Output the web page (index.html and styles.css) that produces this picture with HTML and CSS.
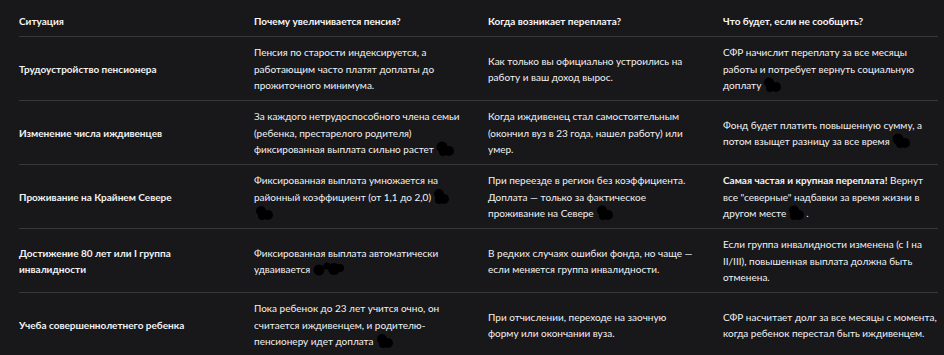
FILE: index.html
```html
<!DOCTYPE html>
<html lang="ru">
<head>
<meta charset="utf-8">
<link rel="stylesheet" href="styles.css">
</head>
<body>
<table class="grid">
  <colgroup>
    <col class="c1"><col class="c2"><col class="c3"><col class="c4">
  </colgroup>
  <thead>
    <tr>
      <th>Ситуация</th>
      <th>Почему увеличивается пенсия?</th>
      <th>Когда возникает переплата?</th>
      <th>Что будет, если не сообщить?</th>
    </tr>
  </thead>
  <tbody>
    <tr>
      <td class="name">Трудоустройство пенсионера</td>
      <td>Пенсия по старости индексируется, а работающим часто платят доплаты до прожиточного минимума.</td>
      <td>Как только вы официально устроились на работу и ваш доход вырос.</td>
      <td>СФР начислит переплату за все месяцы работы и потребует вернуть социальную доплату<span class="blob"><svg width="22" height="16" viewBox="0 0 22 16"><circle cx="8" cy="5.5" r="5"/><circle cx="15" cy="10" r="5"/><circle cx="9" cy="11" r="4"/></svg></span></td>
    </tr>
    <tr>
      <td class="name">Изменение числа иждивенцев</td>
      <td>За каждого нетрудоспособного члена семьи (ребенка, престарелого родителя) фиксированная выплата сильно растет<span class="blob"><svg width="22" height="16" viewBox="0 0 22 16"><circle cx="8" cy="6" r="5.5"/><circle cx="15" cy="10" r="5"/><circle cx="9" cy="11" r="4"/></svg></span></td>
      <td>Когда иждивенец стал самостоятельным (окончил вуз в 23 года, нашел работу) или умер.</td>
      <td>Фонд будет платить повышенную сумму, а потом взыщет разницу за все время<span class="blob"><svg width="22" height="16" viewBox="0 0 22 16"><circle cx="8" cy="6" r="5.5"/><circle cx="15" cy="10" r="5"/><circle cx="10" cy="11" r="4"/></svg></span></td>
    </tr>
    <tr>
      <td class="name">Проживание на Крайнем Севере</td>
      <td>Фиксированная выплата умножается на районный коэффициент (от 1,1 до 2,0)<span class="blob"><svg width="20" height="16" viewBox="0 0 20 16"><circle cx="8" cy="5" r="5"/><circle cx="13" cy="10" r="5"/><circle cx="8" cy="11" r="4"/></svg></span> <span class="blob"><svg width="22" height="16" viewBox="0 0 22 16"><circle cx="7" cy="6" r="5"/><circle cx="14" cy="10" r="5"/><circle cx="8" cy="11" r="4"/></svg></span></td>
      <td>При переезде в регион без коэффициента. Доплата — только за фактическое проживание на Севере<span class="blob"><svg width="22" height="16" viewBox="0 0 22 16"><circle cx="8" cy="5.5" r="5"/><circle cx="14" cy="10" r="5"/><circle cx="9" cy="11" r="4"/></svg></span></td>
      <td><strong>Самая частая и крупная переплата!</strong> Вернут все "северные" надбавки за время жизни в другом месте<span class="blob"><svg width="20" height="16" viewBox="0 0 20 16"><circle cx="8" cy="5.5" r="5"/><circle cx="13" cy="10" r="5"/><circle cx="8" cy="11" r="4"/></svg></span>.</td>
    </tr>
    <tr>
      <td class="name">Достижение 80 лет или I группа инвалидности</td>
      <td>Фиксированная выплата автоматически удваивается<span class="blob"><svg width="38" height="16" viewBox="0 0 38 16"><circle cx="9" cy="9" r="5.5"/><circle cx="17" cy="5" r="3.5"/><circle cx="24" cy="8" r="6"/><circle cx="30" cy="7" r="4"/></svg></span></td>
      <td>В редких случаях ошибки фонда, но чаще — если меняется группа инвалидности.</td>
      <td>Если группа инвалидности изменена (с I на II/III), повышенная выплата должна быть отменена.</td>
    </tr>
    <tr>
      <td class="name">Учеба совершеннолетнего ребенка</td>
      <td>Пока ребенок до 23 лет учится очно, он считается иждивенцем, и родителю-пенсионеру идет доплата<span class="blob"><svg width="22" height="16" viewBox="0 0 22 16"><circle cx="8" cy="6" r="5"/><circle cx="14" cy="10" r="5"/><circle cx="9" cy="11" r="4"/></svg></span></td>
      <td>При отчислении, переходе на заочную форму или окончании вуза.</td>
      <td>СФР насчитает долг за все месяцы с момента, когда ребенок перестал быть иждивенцем.</td>
    </tr>
  </tbody>
</table>
</body>
</html>
```

FILE: styles.css
```css
html, body {
  margin: 0;
  background: #18181b;
}
body {
  padding: 6px 0 0 19px;
  font-family: Lato, "Noto Sans", sans-serif;
  font-size: 10px;
  line-height: 16.35px;
  color: #f2f2f2;
}
.grid {
  border-collapse: collapse;
  table-layout: fixed;
  width: 919px;
}
.c1 { width: 235px; }
.c2 { width: 234px; }
.c3 { width: 235px; }
.c4 { width: 215px; }
th, td {
  text-align: left;
  vertical-align: middle;
  padding: 7px 0;
  border-bottom: 1px solid #38383a;
}
td:nth-child(1), th:nth-child(1) { padding-right: 35px; }
td:nth-child(2), th:nth-child(2) { padding-right: 24px; }
td:nth-child(3), th:nth-child(3) { padding-right: 27px; }
th {
  font-weight: 700;
  color: #f6f6f6;
}
td.name {
  font-weight: 700;
}
strong {
  font-weight: 700;
}
.blob {
  display: inline-block;
  vertical-align: -4px;
  line-height: 0;
}
.blob svg {
  fill: #000;
}
```
